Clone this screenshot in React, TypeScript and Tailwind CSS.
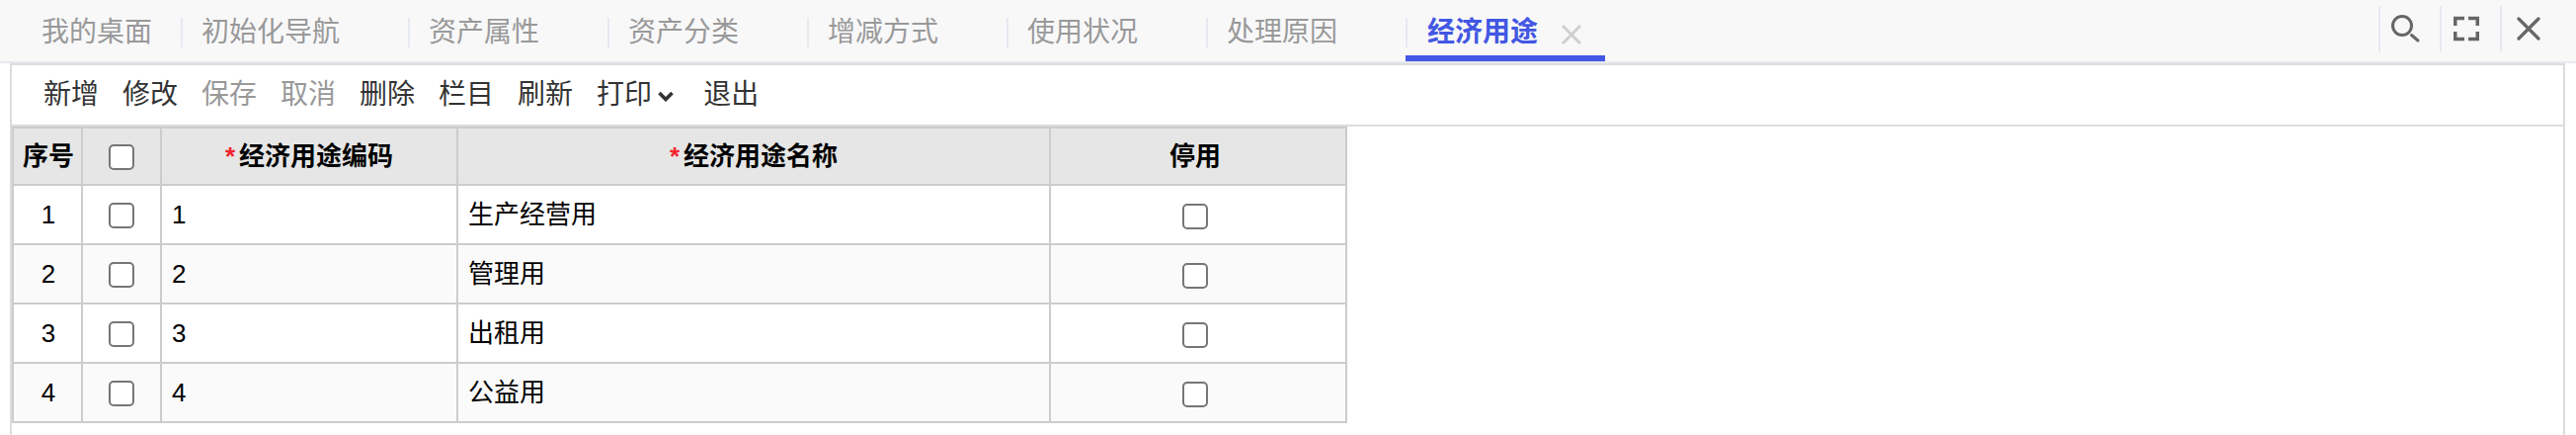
import React from "react";

const font = { fontFamily: '"Liberation Sans", "Noto Sans CJK SC", sans-serif' };

const tabs = ["初始化导航", "资产属性", "资产分类", "增减方式", "使用状况", "处理原因"];
const tools: [string, boolean][] = [
  ["新增", false],
  ["修改", false],
  ["保存", true],
  ["取消", true],
  ["删除", false],
  ["栏目", false],
  ["刷新", false],
];
const rows = [
  ["1", "生产经营用"],
  ["2", "管理用"],
  ["3", "出租用"],
  ["4", "公益用"],
];

function Check({ low }: { low?: boolean }) {
  return (
    <input
      type="checkbox"
      className={
        low
          ? "block appearance-none w-[26px] h-[26px] mx-auto mt-[4px] bg-white border-2 border-[#767676] rounded-[5px]"
          : "block appearance-none w-[26px] h-[26px] mx-auto mt-[2px] bg-white border-2 border-[#767676] rounded-[5px]"
      }
    />
  );
}

function Tab({ label, first }: { label: string; first?: boolean }) {
  return (
    <div className="h-[62px] pt-[18px] border-b-[6px] border-transparent">
      <div
        className={
          first
            ? "h-[30px] flex items-center pl-[42px] pr-[29px] text-[28px] text-[#999]"
            : "h-[30px] flex items-center border-l-2 border-[#e6e9f0] pl-[19px] pr-[69px] text-[28px] text-[#999]"
        }
      >
        {label}
      </div>
    </div>
  );
}

export default function App() {
  return (
    <div className="w-[2608px] h-[440px] overflow-hidden bg-white flex flex-col" style={font}>
      <div className="h-[64px] shrink-0 flex bg-[#f8f8f9] border-b-2 border-[#e6e9ed]">
        <Tab label="我的桌面" first />
        {tabs.map((t) => (
          <Tab key={t} label={t} />
        ))}
        <div className="h-[62px] w-[202px] pt-[18px] border-b-[6px] border-[#4257e3]">
          <div className="h-[30px] flex items-center border-l-2 border-[#e6e9f0] pl-[20px] text-[28px] font-semibold text-[#4257e3]">
            经济用途
            <svg className="ml-[24px] mt-[4px]" width="20" height="20" viewBox="0 0 20 20" fill="none" stroke="#cfcfcf" strokeWidth="3">
              <path d="M1 1 19 19M19 1 1 19" />
            </svg>
          </div>
        </div>
        <div className="ml-auto h-[62px] flex pt-[6px] pr-[37px]">
          <div className="h-[47px] w-[62px] border-l-2 border-[#e6e9f0] pl-[11px] pt-[8px]">
            <svg width="30" height="30" viewBox="0 0 30 30" fill="none" stroke="#666" strokeWidth="3">
              <circle cx="11" cy="12" r="9.5" />
              <path d="M20.5 21.5 27 27" strokeLinecap="round" />
            </svg>
          </div>
          <div className="h-[47px] w-[61px] border-l-2 border-[#e6e9f0] pl-[12px] pt-[10px]">
            <svg width="26" height="26" viewBox="0 0 26 26" fill="none" stroke="#666" strokeWidth="3.5">
              <path d="M11 2.5H1.75V10M15 2.5H24.25V10M11 23.5H1.75V16M15 23.5H24.25V16" />
            </svg>
          </div>
          <div className="h-[47px] w-[40px] border-l-2 border-[#e6e9f0] pl-[15px] pt-[11px]">
            <svg width="24" height="24" viewBox="0 0 24 24" fill="none" stroke="#666" strokeWidth="3.2">
              <path d="M2 2 22 22M22 2 2 22" strokeLinecap="round" />
            </svg>
          </div>
        </div>
      </div>

      <div className="flex-1 ml-[10px] mr-[11px] border-x-2 border-t-2 border-[#dcdcdc]">
        <div className="h-[62px] flex items-center pl-[32px] gap-[24px] text-[28px] text-[#333] border-b-2 border-[#dcdcdc]">
          {tools.map(([t, off]) => (
            <span key={t} className={off ? "text-[#999]" : ""}>
              {t}
            </span>
          ))}
          <span className="flex items-center">
            打印
            <svg className="ml-[6px] mt-[2px]" width="16" height="11" viewBox="0 0 16 11" fill="none" stroke="#333" strokeWidth="3.6">
              <path d="M1.5 2 8 8.5 14.5 2" />
            </svg>
          </span>
          <span className="ml-[6px]">退出</span>
        </div>

        <table className="table-fixed w-[1352px] border-separate border-spacing-0 border-l-2 border-t-2 border-[#cccccc] text-[26px] text-black">
          <colgroup>
            <col className="w-[70px]" />
            <col className="w-[80px]" />
            <col className="w-[300px]" />
            <col className="w-[600px]" />
            <col className="w-[300px]" />
          </colgroup>
          <thead>
            <tr className="h-[58px] bg-[#e6e6e6] font-bold">
              <th className="border-r-2 border-b-2 border-[#cccccc] pl-[2px]">序号</th>
              <th className="border-r-2 border-b-2 border-[#cccccc]">
                <Check />
              </th>
              <th className="border-r-2 border-b-2 border-[#cccccc]">
                <span className="text-[#f5222d] mr-[4px]">*</span>经济用途编码
              </th>
              <th className="border-r-2 border-b-2 border-[#cccccc]">
                <span className="text-[#f5222d] mr-[4px]">*</span>经济用途名称
              </th>
              <th className="border-r-2 border-b-2 border-[#cccccc] pr-[6px]">停用</th>
            </tr>
          </thead>
          <tbody>
            {rows.map(([code, name], i) => (
              <tr key={code} className={i % 2 === 1 ? "h-[60px] bg-[#fafafa]" : "h-[60px] bg-white"}>
                <td className="border-r-2 border-b-2 border-[#cccccc] text-center pl-[2px]">{code}</td>
                <td className="border-r-2 border-b-2 border-[#cccccc]">
                  <Check />
                </td>
                <td className="border-r-2 border-b-2 border-[#cccccc] pl-[10px]">{code}</td>
                <td className="border-r-2 border-b-2 border-[#cccccc] pl-[10px]">{name}</td>
                <td className="border-r-2 border-b-2 border-[#cccccc] pr-[6px]">
                  <Check low />
                </td>
              </tr>
            ))}
          </tbody>
        </table>
      </div>
    </div>
  );
}
